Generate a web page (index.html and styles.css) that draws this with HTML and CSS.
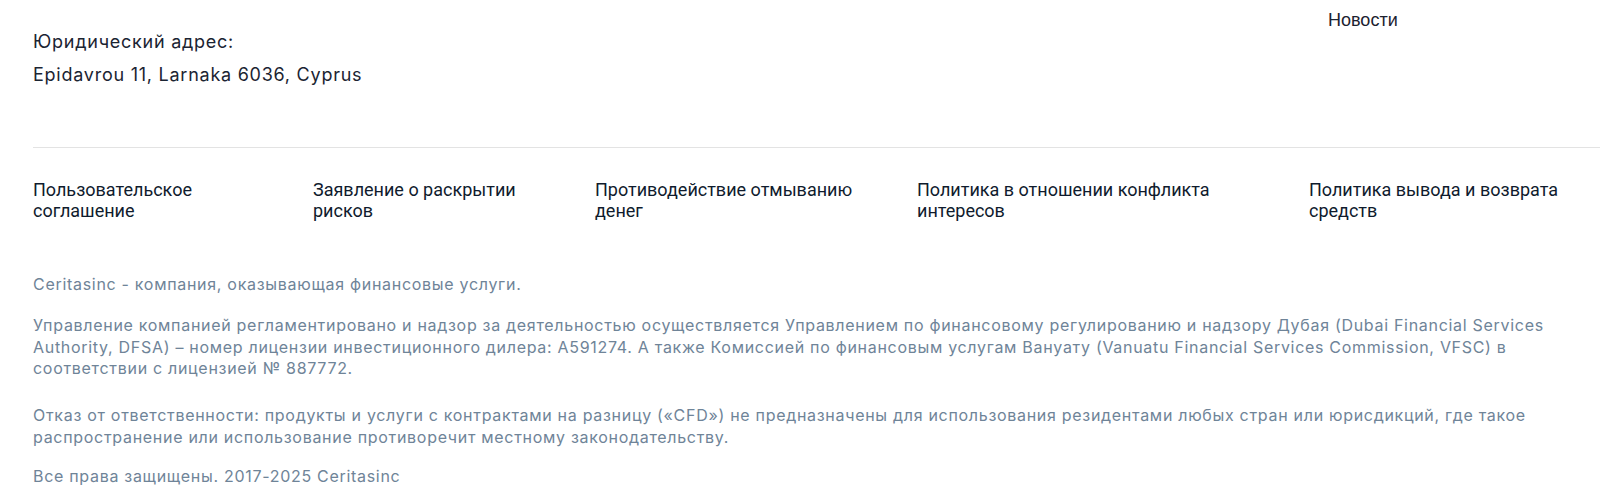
FILE: index.html
```html
<!DOCTYPE html>
<html lang="ru">
<head>
<meta charset="utf-8">
<title>Footer</title>
<link rel="stylesheet" href="styles.css">
</head>
<body>
<footer class="footer">
  <div class="top">
    <div class="address">
      <p class="address-title">Юридический адрес:</p>
      <p class="address-line">Epidavrou 11, Larnaka 6036, Cyprus</p>
    </div>
    <nav class="nav">
      <a class="nav-link" href="#">Новости</a>
    </nav>
  </div>
  <div class="divider"></div>
  <div class="docs">
    <a class="doc doc-1" href="#">Пользовательское соглашение</a>
    <a class="doc doc-2" href="#">Заявление о раскрытии рисков</a>
    <a class="doc doc-3" href="#">Противодействие отмыванию денег</a>
    <a class="doc doc-4" href="#">Политика в отношении конфликта интересов</a>
    <a class="doc doc-5" href="#">Политика вывода и возврата средств</a>
  </div>
  <div class="legal">
    <p class="legal-p legal-intro">Ceritasinc - компания, оказывающая финансовые услуги.</p>
    <p class="legal-p legal-license">Управление компанией регламентировано и надзор за деятельностью осуществляется Управлением по финансовому регулированию и надзору Дубая (Dubai Financial Services Authority, DFSA) – номер лицензии инвестиционного дилера: A591274. А также Комиссией по финансовым услугам Вануату (Vanuatu Financial Services Commission, VFSC) в<br>соответствии с лицензией № 887772.</p>
    <p class="legal-p legal-disclaimer">Отказ от ответственности: продукты и услуги с контрактами на разницу («CFD») не предназначены для использования резидентами любых стран или юрисдикций, где такое распространение или использование противоречит местному законодательству.</p>
    <p class="legal-p legal-copy">Все права защищены. 2017-2025 Ceritasinc</p>
  </div>
</footer>
</body>
</html>
```

FILE: styles.css
```css
* {
  box-sizing: border-box;
}

html, body {
  margin: 0;
  padding: 0;
  background: #ffffff;
}

.footer {
  padding: 0 0 0 33px;
  font-family: Inter, "Noto Sans", sans-serif;
}

.top {
  display: flex;
  justify-content: space-between;
  align-items: flex-start;
}

.address {
  padding-top: 30px;
  color: #1b2432;
  font-size: 18px;
  line-height: 24px;
  letter-spacing: 0.75px;
}

.address p {
  margin: 0;
}

.address .address-line {
  margin-top: 9px;
}

.nav {
  width: 272px;
  padding-top: 10px;
}

.nav-link {
  font-family: "Liberation Sans", Arial, sans-serif;
  font-size: 18px;
  line-height: 21px;
  color: #1c2230;
  text-decoration: none;
}

.divider {
  margin-top: 60px;
  height: 1px;
  background: #e3e3e3;
}

.docs {
  display: grid;
  grid-template-columns: 280px 282px 322px 392px 1fr;
  padding-top: 31px;
}

.doc {
  font-family: Roboto, "Liberation Sans", sans-serif;
  font-size: 18px;
  line-height: 21.4px;
  color: #0f1b2d;
  text-decoration: none;
}

.doc-1 { max-width: 190px; }
.doc-2 { max-width: 220px; }
.doc-3 { max-width: 270px; }
.doc-4 { max-width: 300px; }
.doc-5 { max-width: 260px; }

.legal {
  padding-top: 52px;
  padding-right: 10px;
  color: #6f8498;
  font-size: 16px;
  line-height: 21.4px;
  letter-spacing: 0.7px;
}

.legal-p {
  margin: 0;
}

.legal-intro { margin-bottom: 20px; }
.legal-license { margin-bottom: 26px; }
.legal-disclaimer { margin-bottom: 18px; }
```
